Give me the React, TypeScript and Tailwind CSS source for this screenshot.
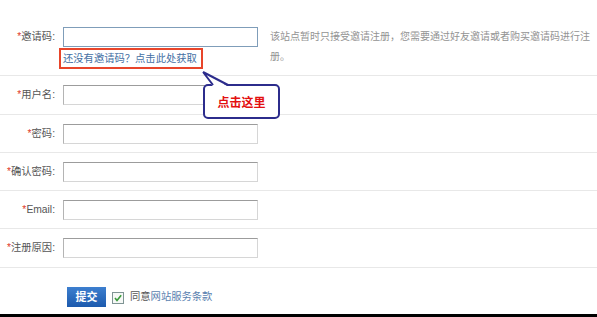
import React from 'react';

const rows: { label: string; h: string }[] = [
  { label: '用户名', h: 'h-[39px]' },
  { label: '密码', h: 'h-[38px]' },
  { label: '确认密码', h: 'h-[38px]' },
  { label: 'Email', h: 'h-[38px]' },
  { label: '注册原因', h: 'h-[39px]' },
];

function Label({ text }: { text: string }) {
  return (
    <div className="w-[55px] shrink-0 text-right leading-[20px] text-[#555] whitespace-nowrap">
      <span className="text-[#e03a2a]">*</span>
      {text}:
    </div>
  );
}

function TextBox({ invite }: { invite?: boolean }) {
  return (
    <input
      type="text"
      className={`block w-[195px] h-[20px] bg-white border outline-none ${
        invite
          ? 'border-[#7f9db9]'
          : 'border-t-[#9c9c9c] border-l-[#b4b4b4] border-r-[#d6d6d6] border-b-[#d6d6d6]'
      }`}
    />
  );
}

export default function App() {
  return (
    <div className="relative w-[597px] h-[317px] bg-white overflow-hidden text-[10.3px] font-['Liberation_Sans','Noto_Sans_CJK_SC',sans-serif]">
      {/* invite row */}
      <div className="flex items-start h-[76px] pt-[27px] border-b border-[#e8e8e8]">
        <Label text="邀请码" />
        <div className="ml-[8px] w-[195px] shrink-0">
          <TextBox invite />
          <div className="mt-[1px] -ml-[4px] w-[144px] h-[21px] border-2 border-[#e8452a] pl-[2px] leading-[17px] text-[#4470a4] whitespace-nowrap">
            还没有邀请码？点击此处获取
          </div>
        </div>
        <div className="ml-[12px] leading-[20px] text-[10px] text-[#939393] whitespace-nowrap">
          <div>该站点暂时只接受邀请注册，您需要通过好友邀请或者购买邀请码进行注</div>
          <div>册。</div>
        </div>
      </div>

      {rows.map((r) => (
        <div key={r.label} className={`flex items-center ${r.h} border-b border-[#e8e8e8]`}>
          <Label text={r.label} />
          <div className="ml-[8px]">
            <TextBox />
          </div>
        </div>
      ))}

      {/* submit */}
      <div className="flex items-start h-[46px] pt-[19px] pl-[67px]">
        <button className="w-[39px] h-[20px] bg-gradient-to-b from-[#3d7fcf] to-[#1c5aad] text-white font-bold text-[11px] leading-[20px]">
          提交
        </button>
        <svg className="ml-[6px] mt-[5px]" width="12" height="12" viewBox="0 0 12 12">
          <rect x="0.5" y="0.5" width="11" height="11" fill="#f6f8f6" stroke="#7f9494" />
          <path d="M3 6 L5 8.5 L9.2 3.2" fill="none" stroke="#3a9a3a" strokeWidth="1.6" />
        </svg>
        <span className="ml-[6px] leading-[20px] text-[#555]">
          同意<span className="text-[#5a7fb0]">网站服务条款</span>
        </span>
      </div>
      <div className="h-[4px] bg-black" />

      {/* callout annotation */}
      <div className="absolute left-[203px] top-[84px] w-[77px] h-[35px] rounded-[5px] border-2 border-[#2c2c8c] bg-white flex items-center justify-center text-[12px] font-bold text-[#e31010] font-['Noto_Sans_CJK_SC',sans-serif]">
        点击这里
      </div>
      <svg className="absolute left-[200px] top-[70px]" width="32" height="18" viewBox="0 0 32 18">
        <polygon points="3,2 13,16.5 28,16.5" fill="#fff" />
        <path d="M3 2 L13 15 M3 2 L28 15" stroke="#2c2c8c" strokeWidth="2" fill="none" />
      </svg>
    </div>
  );
}
